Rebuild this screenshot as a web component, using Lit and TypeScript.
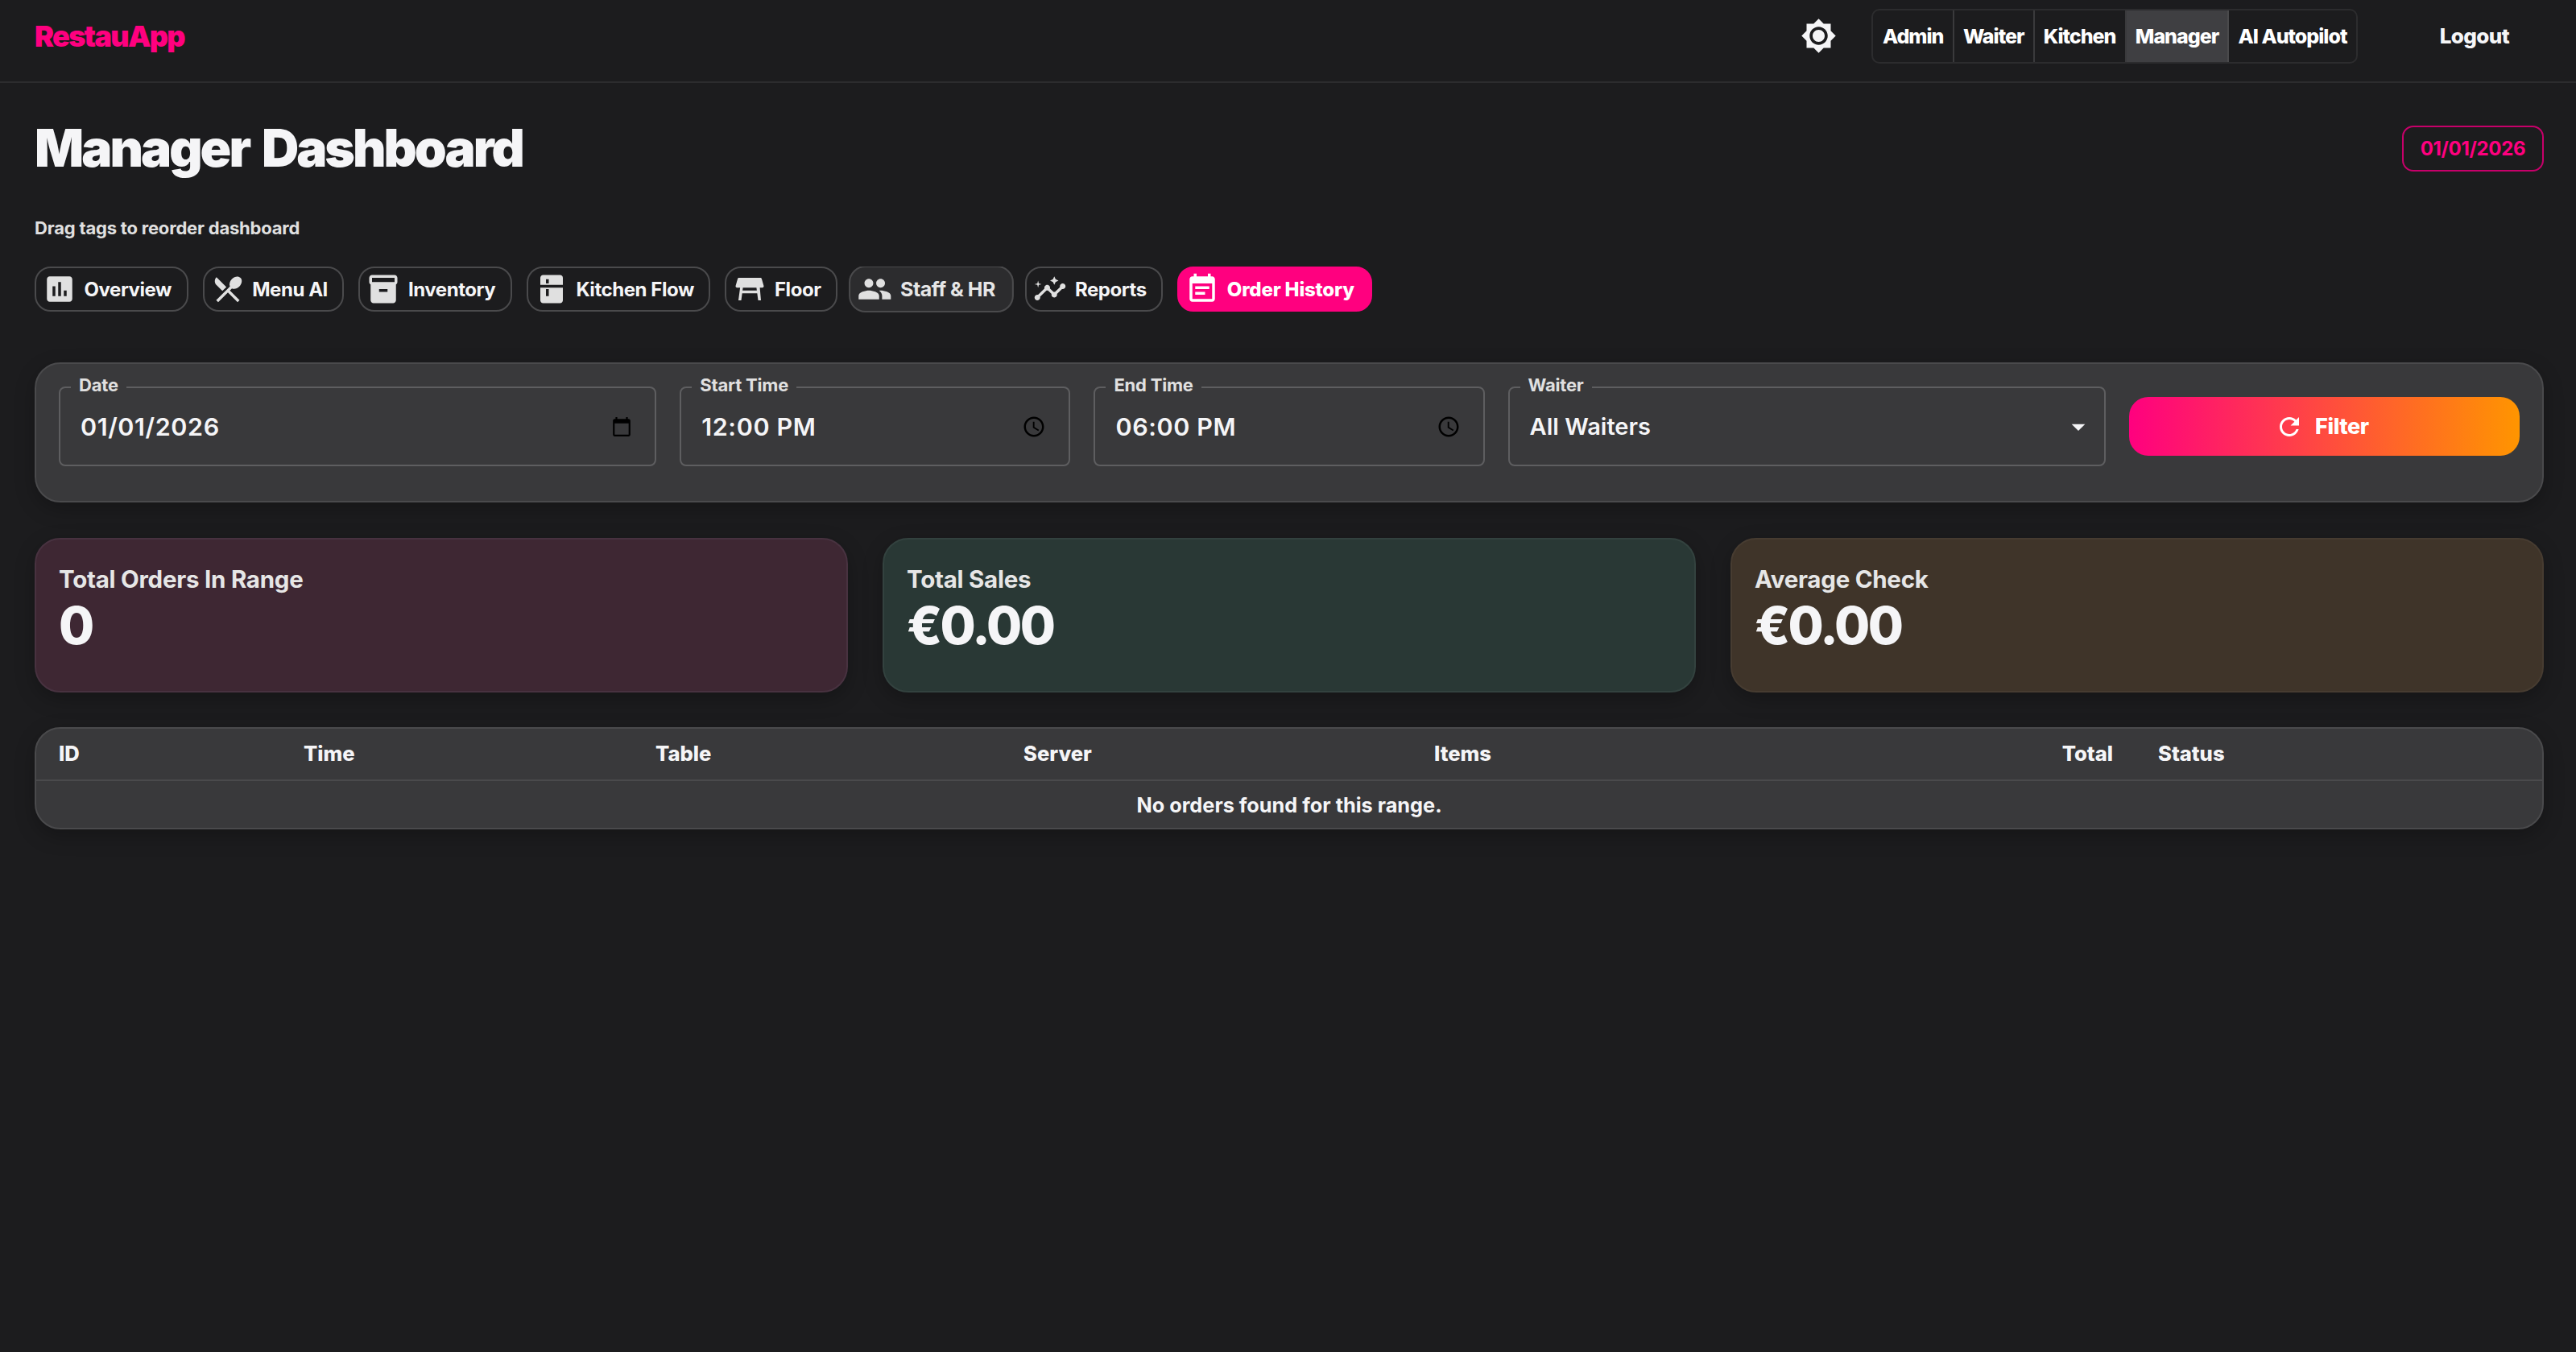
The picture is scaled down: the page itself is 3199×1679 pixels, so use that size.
import { LitElement, html, css, svg } from "lit";
import { customElement } from "lit/decorators.js";

const P: Record<string, string> = {
  sun: "M20 8.69V4h-4.69L12 .69 8.69 4H4v4.69L.69 12 4 15.31V20h4.69L12 23.31 15.31 20H20v-4.69L23.31 12 20 8.69zM12 18c-3.31 0-6-2.69-6-6s2.69-6 6-6 6 2.69 6 6-2.69 6-6 6zm0-10c-2.21 0-4 1.79-4 4s1.79 4 4 4 4-1.79 4-4-1.79-4-4-4z",
  overview: "M19 3H5c-1.1 0-2 .9-2 2v14c0 1.1.9 2 2 2h14c1.1 0 2-.9 2-2V5c0-1.1-.9-2-2-2zM9 17H7v-7h2v7zm4 0h-2V7h2v10zm4 0h-2v-4h2v4z",
  menu: "m8.1 13.34 2.83-2.83L3.91 3.5c-1.56 1.56-1.56 4.09 0 5.66l4.19 4.18zm6.78-1.81c1.53.71 3.68.21 5.27-1.38 1.91-1.91 2.28-4.65.81-6.12-1.46-1.46-4.2-1.1-6.12.81-1.59 1.59-2.09 3.74-1.38 5.27L3.7 19.87l1.41 1.41L12 14.41l6.88 6.88 1.41-1.41L13.41 13l1.47-1.47z",
  inventory: "M20 2H4c-1 0-2 .9-2 2v3.01c0 .72.43 1.34 1 1.69V20c0 1.1 1.1 2 2 2h14c.9 0 2-.9 2-2V8.7c.57-.35 1-.97 1-1.69V4c0-1.1-1-2-2-2zm-5 12H9v-2h6v2zm5-7H4V4l16-.02V7z",
  kitchen: "M18 2.01 6 2c-1.1 0-2 .9-2 2v5h16V4c0-1.11-.9-1.99-2-1.99zM10 8H8V5h2v3zM4 20c0 1.1.9 2 2 2h12c1.1 0 2-.9 2-2v-9.02H4V20zm4-8h2v5H8v-5z",
  floor: "M21.96 9.73l-1.43-5C20.41 4.3 20.02 4 19.57 4H4.43c-.45 0-.84.3-.96.73l-1.43 5c-.18.63.3 1.27.96 1.27h2.2L4 20h2l.67-5h10.67l.66 5h2l-.8-9H21c.66 0 1.14-.64.96-1.27zM6.93 13l.27-2h9.6l.27 2H6.93z",
  staff: "M16 11c1.66 0 2.99-1.34 2.99-3S17.66 5 16 5c-1.66 0-3 1.34-3 3s1.34 3 3 3zm-8 0c1.66 0 2.99-1.34 2.99-3S9.66 5 8 5C6.34 5 5 6.34 5 8s1.34 3 3 3zm0 2c-2.33 0-7 1.17-7 3.5V19h14v-2.5c0-2.33-4.67-3.5-7-3.5zm8 0c-.29 0-.62.02-.97.05 1.16.84 1.97 1.97 1.97 3.45V19h6v-2.5c0-2.33-4.67-3.5-7-3.5z",
  reports: "M21 8c-1.45 0-2.26 1.44-1.93 2.51l-3.55 3.56c-.3-.09-.74-.09-1.04 0l-2.55-2.55C12.27 10.45 11.46 9 10 9c-1.45 0-2.27 1.44-1.93 2.52l-4.56 4.55C2.44 15.74 1 16.55 1 18c0 1.1.9 2 2 2 1.45 0 2.26-1.44 1.93-2.51l4.55-4.56c.3.09.74.09 1.04 0l2.55 2.55C12.73 16.55 13.54 18 15 18c1.45 0 2.27-1.44 1.93-2.52l3.56-3.55c1.07.33 2.51-.48 2.51-1.93 0-1.1-.9-2-2-2zM15 9l.94-2.07L18 6l-2.06-.93L15 3l-.92 2.07L12 6l2.08.93zM3.5 11 4 9l2-.5L4 8l-.5-2L3 8l-2 .5L3 9z",
  history: "M17 10H7v2h10v-2zm2-7h-1V1h-2v2H8V1H6v2H5c-1.11 0-1.99.9-1.99 2L3 19c0 1.1.89 2 2 2h14c1.1 0 2-.9 2-2V5c0-1.1-.9-2-2-2zm0 16H5V8h14v11zm-5-5H7v2h7v-2z",
  calendar: "M20 3h-1V1h-2v2H7V1H5v2H4c-1.1 0-2 .9-2 2v16c0 1.1.9 2 2 2h16c1.1 0 2-.9 2-2V5c0-1.1-.9-2-2-2zm0 18H4V8h16v13z",
  clock: "M11.99 2C6.47 2 2 6.48 2 12s4.47 10 9.99 10C17.52 22 22 17.52 22 12S17.52 2 11.99 2zM12 20c-4.42 0-8-3.58-8-8s3.58-8 8-8 8 3.58 8 8-3.58 8-8 8zm.5-13H11v6l5.25 3.15.75-1.23-4.5-2.67z",
  refresh: "M17.65 6.35C16.2 4.9 14.21 4 12 4c-4.42 0-7.99 3.58-7.99 8s3.57 8 7.99 8c3.73 0 6.84-2.55 7.73-6h-2.08c-.82 2.33-3.04 4-5.65 4-3.31 0-6-2.69-6-6s2.69-6 6-6c1.66 0 3.14.69 4.22 1.78L13 11h7V4l-2.35 2.35z",
  caret: "M7 10l5 5 5-5z",
};

const icon = (name: string, cls = "") =>
  html`<svg class="ic ${cls}" viewBox="0 0 24 24" aria-hidden="true">${svg`<path fill-rule="evenodd" d=${P[name]}></path>`}</svg>`;

const NAV = ["Admin", "Waiter", "Kitchen", "Manager", "AI Autopilot"];
const CHIPS: [string, string, string][] = [
  ["overview", "Overview", ""],
  ["menu", "Menu AI", ""],
  ["inventory", "Inventory", ""],
  ["kitchen", "Kitchen Flow", ""],
  ["floor", "Floor", ""],
  ["staff", "Staff & HR", "hover"],
  ["reports", "Reports", ""],
  ["history", "Order History", "active"],
];
const COLS: [string, string][] = [
  ["ID", ""], ["Time", ""], ["Table", ""], ["Server", ""], ["Items", ""], ["Total", "num"], ["Status", ""],
];

@customElement("app-root")
export class AppRoot extends LitElement {
  static styles = css`
    :host {
      display: block;
      min-height: 1679px;
      background: #1c1c1e;
      color: #f5f5f7;
      font-family: Inter, "Liberation Sans", sans-serif;
    }
    .ic { width: 42px; height: 42px; fill: currentColor; flex: none; display: block; }
    header {
      height: 103px;
      box-sizing: border-box;
      border-bottom: 2px solid #2c2c2e;
      padding: 0 83px 0 43px;
      display: flex;
      align-items: center;
    }
    .logo {
      font-size: 36px;
      font-weight: 900;
      letter-spacing: -1.7px;
      color: #ff007f;
      margin-right: auto;
      position: relative;
      top: -6px;
    }
    .theme { width: 45px; height: 45px; margin-right: 43px; color: #f5f5f7; position: relative; top: -6px; }
    .nav {
      display: flex;
      height: 68px;
      box-sizing: border-box;
      border: 2px solid #2c2c2e;
      border-radius: 10px;
      overflow: hidden;
      margin-right: 102px;
      position: relative;
      top: -6px;
    }
    .nav span {
      display: flex;
      align-items: center;
      padding: 0 11.2px;
      font-size: 25px;
      font-weight: 800;
      letter-spacing: -1px;
      color: #fff;
      border-left: 2px solid #3a3a3c;
    }
    .nav span:first-child { border-left: 0; padding-left: 12px; }
    .nav span.on { background: #3f3f42; border-right: 2px solid #4a4a4c; }
    .nav span.on + span { border-left: 0; }
    .logout { font-size: 26px; font-weight: 800; letter-spacing: -0.6px; color: #f5f5f7; position: relative; top: -6px; }
    main { padding: 0 40px 0 43px; }
    .titlebar { display: flex; justify-content: space-between; align-items: flex-start; padding-top: 45px; height: 97px; }
    h1 { margin: 0; font-size: 64px; line-height: 72px; font-weight: 900; letter-spacing: -3px; word-spacing: 6px; color: #f5f5f7; }
    .date {
      margin-top: 8px;
      width: 176px;
      height: 57px;
      box-sizing: border-box;
      border: 2px solid #c7006a;
      border-radius: 14px;
      color: #ff007f;
      font-size: 24px;
      font-weight: 700;
      letter-spacing: -0.3px;
      display: flex;
      align-items: center;
      justify-content: center;
    }
    .hint { font-size: 22px; line-height: 26px; font-weight: 700; color: #e0e0e0; margin-top: 25px; letter-spacing: -0.2px; }
    .chips { display: flex; gap: 18px; margin-top: 35px; padding: 0 4px 10px 0; height: 56px; overflow: hidden; }
    .chip {
      height: 56px;
      box-sizing: border-box;
      border: 2px solid #4a4a4c;
      border-radius: 20px;
      display: flex;
      align-items: center;
      gap: 9.5px;
      padding: 0 18.6px 0 8px;
      font-size: 24px;
      font-weight: 700;
      letter-spacing: -0.45px;
      color: #f5f5f7;
    }
    .chip .ic { color: #e0e0e0; }
    .chip.hover { background: #2c2c2e; padding-right: 20.5px; transform: scale(1.04); color: #e6e6e6; }
    .chip.active { background: #ff007f; border-color: #ff007f; color: #fff; font-weight: 800; letter-spacing: -0.2px; padding-right: 20px; }
    .chip.active .ic { color: #fff; }
    .panel {
      background: #39393b;
      border: 2px solid #4a4a4c;
      border-radius: 32px;
      box-shadow: 0 8px 24px rgba(0, 0, 0, 0.25);
      box-sizing: border-box;
    }
    .filters {
      margin-top: 53px;
      height: 174px;
      padding: 28px 28px 0 28px;
      display: grid;
      grid-template-columns: repeat(12, 1fr);
      column-gap: 29px;
    }
    .field {
      position: relative;
      height: 99px;
      box-sizing: border-box;
      border: 2px solid #5e5e60;
      border-radius: 8px;
      padding: 0 28px 0 25px;
      display: flex;
      align-items: center;
      justify-content: space-between;
    }
    .s3 { grid-column: span 3; }
    .s2 { grid-column: span 2; }
    .field label {
      position: absolute;
      left: 13px;
      top: -17px;
      padding: 0 10px;
      background: #39393b;
      font-size: 22px;
      line-height: 26px;
      font-weight: 700;
      letter-spacing: -0.2px;
      color: #e0e0e0;
    }
    .value { font-size: 29px; font-weight: 600; color: #f5f5f7; }
    .value.dt { font-size: 30.5px; letter-spacing: 0.6px; }
    .field .ic { width: 26px; height: 26px; color: #000; }
    .field .clock { width: 30px; height: 30px; }
    .field .caret { width: 40px; height: 40px; color: #f5f5f7; margin-right: -16px; }
    .btn {
      grid-column: span 2;
      margin-top: 13px;
      height: 73px;
      box-sizing: border-box;
      padding-right: 6px;
      border-radius: 24px;
      background: linear-gradient(90deg, #ff007f, #ff9500);
      display: flex;
      align-items: center;
      justify-content: center;
      gap: 14px;
      color: #fff;
      font-size: 27px;
      font-weight: 800;
      letter-spacing: -0.4px;
    }
    .btn .ic { width: 36px; height: 36px; }
    .stats { display: grid; grid-template-columns: repeat(3, 1fr); gap: 43px; margin-top: 44px; }
    .stat {
      height: 192px;
      box-sizing: border-box;
      border-radius: 32px;
      padding: 31px 28px;
      box-shadow: 0 8px 24px rgba(0, 0, 0, 0.25);
      border: 2px solid;
    }
    .s-pink { background: #3e2733; border-color: #483240; }
    .s-green { background: #293835; border-color: #33423f; }
    .s-amber { background: #3f3429; border-color: #473c31; }
    .stat .t { font-size: 29.5px; line-height: 36px; font-weight: 700; color: #e6e6e6; letter-spacing: -0.25px; }
    .stat .v { font-size: 64px; line-height: 72px; font-weight: 800; color: #f5f5f7; letter-spacing: -2.7px; margin-top: 4px; }
    .tablewrap { margin-top: 43px; overflow: hidden; }
    table { width: 100%; border-collapse: collapse; table-layout: fixed; }
    th, td { font-size: 25.6px; padding: 0 0 2px 28px; text-align: left; font-weight: 800; color: #f5f5f7; }
    thead tr { height: 64px; border-bottom: 2px solid #4a4a4c; }
    th.num { text-align: right; padding-right: 28px; padding-left: 0; }
    tbody td { height: 59px; box-sizing: border-box; font-size: 25.3px; text-align: center; padding: 0; font-weight: 700; color: #f5f5f7; }
    .c1 { width: 304px; } .c2 { width: 437px; } .c3 { width: 457px; } .c4 { width: 510px; } .c5 { width: 499px; } .c6 { width: 400px; }
  `;

  render() {
    return html`
      <header>
        <div class="logo">RestauApp</div>
        ${icon("sun", "theme")}
        <nav class="nav">
          ${NAV.map((n) => html`<span class=${n === "Manager" ? "on" : ""}>${n}</span>`)}
        </nav>
        <div class="logout">Logout</div>
      </header>
      <main>
        <div class="titlebar">
          <h1>Manager Dashboard</h1>
          <div class="date">01/01/2026</div>
        </div>
        <div class="hint">Drag tags to reorder dashboard</div>
        <div class="chips">
          ${CHIPS.map(([i, t, c]) => html`<div class="chip ${c}">${icon(i)}<span>${t}</span></div>`)}
        </div>
        <section class="panel filters">
          <div class="field s3"><label>Date</label><span class="value dt">01/01/2026</span>${icon("calendar")}</div>
          <div class="field s2"><label>Start Time</label><span class="value dt">12:00 PM</span>${icon("clock", "clock")}</div>
          <div class="field s2"><label>End Time</label><span class="value dt">06:00 PM</span>${icon("clock", "clock")}</div>
          <div class="field s3"><label>Waiter</label><span class="value">All Waiters</span>${icon("caret", "caret")}</div>
          <div class="btn">${icon("refresh")}<span>Filter</span></div>
        </section>
        <section class="stats">
          <div class="stat s-pink"><div class="t">Total Orders In Range</div><div class="v">0</div></div>
          <div class="stat s-green"><div class="t">Total Sales</div><div class="v">€0.00</div></div>
          <div class="stat s-amber"><div class="t">Average Check</div><div class="v">€0.00</div></div>
        </section>
        <section class="panel tablewrap">
          <table>
            <colgroup>
              <col class="c1" /><col class="c2" /><col class="c3" /><col class="c4" /><col class="c5" /><col class="c6" /><col />
            </colgroup>
            <thead><tr>${COLS.map(([t, c]) => html`<th class=${c}>${t}</th>`)}</tr></thead>
            <tbody><tr><td colspan="7">No orders found for this range.</td></tr></tbody>
          </table>
        </section>
      </main>
    `;
  }
}
